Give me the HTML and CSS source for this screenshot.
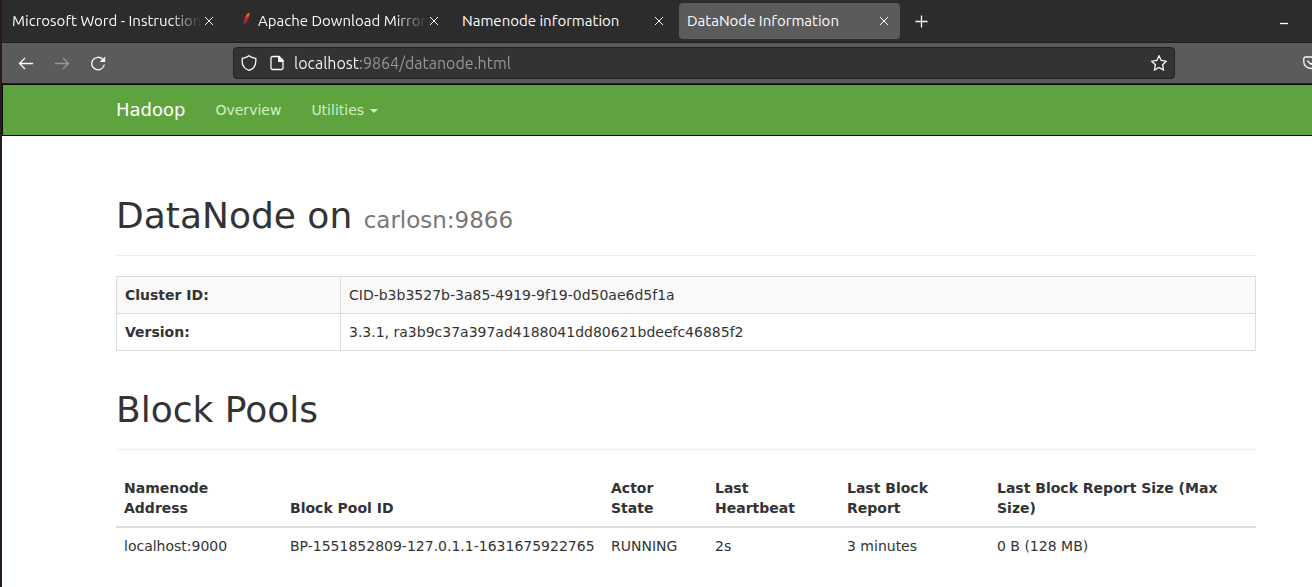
FILE: index.html
```html
<!DOCTYPE html>
<html lang="en">
<head>
<meta charset="utf-8">
<title>DataNode Information</title>
<link rel="stylesheet" href="styles.css">
</head>
<body>
<div class="window">
  <header class="chrome">
    <div class="tabbar">
      <div class="tab">
        <button class="tab-title tab-title-long" type="button">Microsoft Word - Instruction_</button>
        <button class="tab-close" type="button" aria-label="Close tab"><svg width="10" height="10" viewBox="0 0 10 10"><path d="M1 1l8 8M9 1L1 9"/></svg></button>
      </div>
      <div class="tab">
        <svg class="favicon" width="16" height="16" viewBox="0 0 16 16" aria-hidden="true"><defs><linearGradient id="feather" x1="0" y1="1" x2="0" y2="0"><stop offset="0" stop-color="#3b2350"/><stop offset=".35" stop-color="#8e2463"/><stop offset=".6" stop-color="#d22128"/><stop offset="1" stop-color="#f79a23"/></linearGradient></defs><path fill="url(#feather)" d="M12.500 0c-2.200 .2-3.700 2-4.700 5C7 7.500 5.800 9.500 5.500 13c2.500-1.500 4.500-3 5.200-6 .7-2.800 1.800-3.500 1.800-7z"/></svg>
        <button class="tab-title tab-title-long" type="button">Apache Download Mirrors</button>
        <button class="tab-close" type="button" aria-label="Close tab"><svg width="10" height="10" viewBox="0 0 10 10"><path d="M1 1l8 8M9 1L1 9"/></svg></button>
      </div>
      <div class="tab">
        <button class="tab-title" type="button">Namenode information</button>
        <button class="tab-close" type="button" aria-label="Close tab"><svg width="10" height="10" viewBox="0 0 10 10"><path d="M1 1l8 8M9 1L1 9"/></svg></button>
      </div>
      <div class="tab tab-active">
        <button class="tab-title" type="button">DataNode Information</button>
        <button class="tab-close" type="button" aria-label="Close tab"><svg width="10" height="10" viewBox="0 0 10 10"><path d="M1 1l8 8M9 1L1 9"/></svg></button>
      </div>
      <button class="icon-button new-tab" type="button" aria-label="New tab"><svg width="13" height="13" viewBox="0 0 13 13"><path d="M6.500 .5v12M.5 6.500h12"/></svg></button>
      <button class="icon-button minimize" type="button" aria-label="Minimize"><svg width="8" height="8" viewBox="0 0 8 8"><path d="M0 6.500h8"/></svg></button>
    </div>
    <div class="toolbar">
      <button class="icon-button" type="button" aria-label="Back"><svg width="16" height="16" viewBox="0 0 16 16"><path d="M15 8.500H1.500M7 3L1.500 8.500 7 14"/></svg></button>
      <button class="icon-button" type="button" aria-label="Forward" disabled><svg width="16" height="16" viewBox="0 0 16 16"><path d="M1 8.500h13.500M9 3l5.500 5.500L9 14"/></svg></button>
      <button class="icon-button reload" type="button" aria-label="Reload"><svg width="16" height="16" viewBox="0 0 16 16"><path d="M14.300 9.500A6.300 6.300 0 1 1 12.600 4.200"/><path class="solid" d="M15.200 1.500V7H9.700z"/></svg></button>
      <div class="urlbar">
        <svg width="16" height="16" viewBox="0 0 16 16" aria-hidden="true"><path d="M8 .8C6 2.500 3.800 3 1.200 3.300v3.200c0 4 3 7.500 6.800 8.900 3.800-1.400 6.800-4.900 6.800-8.900V3.300C12.200 3 10 2.500 8 .8z"/></svg>
        <svg class="page-icon" width="16" height="16" viewBox="0 0 16 16" aria-hidden="true"><path d="M3.500 1.500H10l4 4V13a1.500 1.500 0 0 1-1.500 1.500h-9A1.500 1.500 0 0 1 2 13V3a1.500 1.500 0 0 1 1.500-1.500z"/><path class="solid" d="M9 1h1.400L14.500 5.200V7H9z"/></svg>
        <input class="address" type="text" aria-label="Address" value="localhost:9864/datanode.html">
        <button class="star" type="button" aria-label="Bookmark this page"><svg width="16" height="16" viewBox="0 0 16 16"><path d="M8 .8l2.200 4.700 5.100.7-3.700 3.600.9 5.200L8 12.500 3.500 15l.9-5.200L.7 6.200l5.100-.7z"/></svg></button>
      </div>
      <button class="pocket" type="button" aria-label="Save to Pocket"><svg width="16" height="16" viewBox="0 0 16 16"><path d="M2.500 2h11A1.700 1.700 0 0 1 15.200 3.700V7A7.200 6.500 0 0 1 .8 7V3.700A1.700 1.700 0 0 1 2.500 2zM4.300 5.800L8 9.300l3.700-3.500"/></svg></button>
    </div>
  </header>

  <nav class="navbar">
    <a class="brand" href="#">Hadoop</a>
    <a class="nav-link" href="#">Overview</a>
    <button class="nav-link" type="button">Utilities <span class="caret"></span></button>
  </nav>

  <main class="content">
    <h1 class="page-header">DataNode on <small>carlosn:9866</small></h1>
    <table class="info">
      <tr><th scope="row">Cluster ID:</th><td>CID-b3b3527b-3a85-4919-9f19-0d50ae6d5f1a</td></tr>
      <tr><th scope="row">Version:</th><td>3.3.1, ra3b9c37a397ad4188041dd80621bdeefc46885f2</td></tr>
    </table>

    <h1 class="page-header">Block Pools</h1>
    <table class="pools">
      <colgroup><col class="col-address"><col class="col-pool"><col class="col-state"><col class="col-heartbeat"><col class="col-report"><col></colgroup>
      <thead>
        <tr><th>Namenode Address</th><th>Block Pool ID</th><th>Actor State</th><th>Last Heartbeat</th><th>Last Block Report</th><th>Last Block Report Size (Max Size)</th></tr>
      </thead>
      <tbody>
        <tr><td>localhost:9000</td><td>BP-1551852809-127.0.1.1-1631675922765</td><td>RUNNING</td><td>2s</td><td>3 minutes</td><td>0 B (128 MB)</td></tr>
      </tbody>
    </table>
  </main>
</div>
</body>
</html>
```

FILE: styles.css
```css
* { box-sizing: border-box; }

body {
  margin: 0;
  color: #333;
  background: #fff;
  font: 14px/20px "DejaVu Sans", sans-serif;
}

button {
  margin: 0;
  padding: 0;
  border: 0;
  background: none;
  color: inherit;
  font: inherit;
}

.window {
  min-height: 100vh;
  overflow: hidden;
  border-left: 2px solid #2a1b16;
}

/* Browser chrome */
.chrome {
  color: #fbfbfe;
  font: 15px/20px Ubuntu, "Noto Sans", sans-serif;
}

.chrome svg {
  display: block;
  flex: none;
  fill: none;
  stroke: currentColor;
  stroke-width: 1.3;
}

.chrome .favicon { stroke: none; }
.chrome .solid { fill: currentColor; stroke: none; }

.tabbar {
  display: flex;
  align-items: center;
  gap: 4px;
  height: 43px;
  padding-left: 2px;
  border-bottom: 1px solid #1f1f1f;
  background: #2c2c2c;
}

.tab {
  display: flex;
  align-items: center;
  width: 221px;
  height: 36px;
  padding: 0 9px 0 8px;
  border-radius: 4px;
}

.tab-active { background: #5b5b5b; }
.favicon { margin-right: 5px; }

.tab-title {
  flex: 1;
  min-width: 0;
  overflow: hidden;
  text-align: left;
  white-space: nowrap;
}

.tab-title-long { mask-image: linear-gradient(to left, transparent, #000 32px); }

.tab-close {
  display: grid;
  place-items: center;
  width: 14px;
  height: 20px;
}

.chrome .tab-close svg { stroke-width: 1; }

.icon-button {
  display: grid;
  place-items: center;
  width: 36px;
  height: 36px;
}

.icon-button:disabled { color: #999; }
.new-tab { width: 35px; }
.minimize { margin-left: auto; margin-right: 10px; }

.toolbar {
  display: flex;
  align-items: center;
  height: 41px;
  padding-left: 6px;
  border-bottom: 1px solid #1f1f1f;
  background: #5b5b5b;
}

.reload { margin-right: 117px; }

.urlbar {
  display: flex;
  flex: 1;
  align-items: center;
  gap: 12px;
  height: 32px;
  padding: 0 7px;
  border: 1px solid #222;
  border-radius: 4px;
  background: #333;
}

.page-icon { margin-right: -3px; }

/* The host part of the address is brighter than the rest */
.address {
  flex: 1;
  min-width: 0;
  padding: 0;
  border: 0;
  outline: 0;
  color: transparent;
  caret-color: #fff;
  background: linear-gradient(to right, #fbfbfe 66px, #999 66px);
  background-clip: text;
  font: inherit;
  font-size: 16px;
}

.pocket {
  width: 9px;
  margin-left: 128px;
  overflow: hidden;
}

/* Page */
.navbar {
  display: flex;
  align-items: center;
  height: 52px;
  padding-left: 98px;
  border: 1px solid #080808;
  border-right: 0;
  background: #5fa33e;
}

.brand, .nav-link {
  padding: 15px;
  color: #d2f0c2;
  text-decoration: none;
}

.brand {
  color: #fff;
  font-size: 18px;
}

.caret {
  display: inline-block;
  margin-left: 1px;
  border: 4px solid transparent;
  border-top-color: currentColor;
  border-bottom: 0;
  vertical-align: middle;
}

.content { padding: 60px 56px 20px 114px; }

.page-header {
  margin: 0 0 20px;
  padding-bottom: 19px;
  border-bottom: 1px solid #eee;
  font-size: 36px;
  font-weight: 400;
  line-height: 40px;
}

.page-header small {
  color: #777;
  font-size: 23px;
  line-height: 1;
}

table {
  width: 100%;
  border-collapse: collapse;
}

th, td {
  padding: 8px;
  text-align: left;
}

.info { margin-bottom: 39px; }
.info th, .info td { border: 1px solid #ddd; }
.info th { width: 224px; }
.info tr:first-child { background: #f9f9f9; }

.pools { table-layout: fixed; }
.pools thead th { vertical-align: bottom; border-bottom: 2px solid #ddd; }
.pools td { white-space: nowrap; }
.col-address { width: 166px; }
.col-pool { width: 321px; }
.col-state { width: 104px; }
.col-heartbeat { width: 132px; }
.col-report { width: 150px; }
```
